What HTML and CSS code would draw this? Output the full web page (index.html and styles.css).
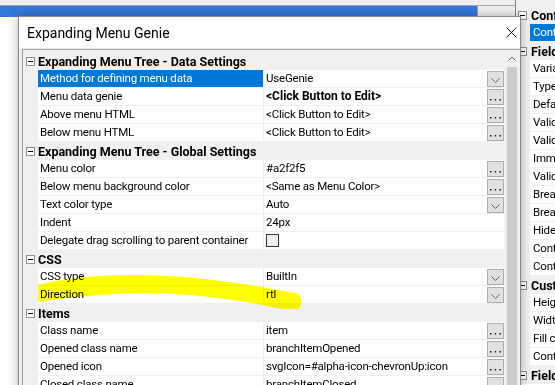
FILE: index.html
```html
<!DOCTYPE html>
<html lang="en">
<head>
    <meta charset="UTF-8">
    <title>Expanding Menu Genie</title>
    <link rel="stylesheet" href="styles.css">
</head>
<body>
<div class="desktop">
    <div class="main-area">
        <div class="strip"></div>
        <div class="list-head">
            <div class="list-sel"></div>
            <div class="list-rest"></div>
        </div>
    </div>

    <!-- property panel behind the dialog -->
    <div class="side-panel">
        <div class="sp-top"></div>
        <div class="sp-cat"><span class="toggle"></span><span class="sp-label">Configuration</span></div>
        <div class="sp-row"><span class="sp-gutter"></span><span class="sp-name sel">Control name</span></div>
        <div class="sp-cat"><span class="toggle"></span><span class="sp-label">Fields</span></div>
        <div class="sp-row"><span class="sp-gutter"></span><span class="sp-name">Variable</span></div>
        <div class="sp-row"><span class="sp-gutter"></span><span class="sp-name">Type</span></div>
        <div class="sp-row"><span class="sp-gutter"></span><span class="sp-name">Default value</span></div>
        <div class="sp-row"><span class="sp-gutter"></span><span class="sp-name">Validation</span></div>
        <div class="sp-row"><span class="sp-gutter"></span><span class="sp-name">Validation message</span></div>
        <div class="sp-row"><span class="sp-gutter"></span><span class="sp-name">Immediate</span></div>
        <div class="sp-row"><span class="sp-gutter"></span><span class="sp-name">Validate on</span></div>
        <div class="sp-row"><span class="sp-gutter"></span><span class="sp-name">Break before</span></div>
        <div class="sp-row"><span class="sp-gutter"></span><span class="sp-name">Break after</span></div>
        <div class="sp-row"><span class="sp-gutter"></span><span class="sp-name">Hide</span></div>
        <div class="sp-row"><span class="sp-gutter"></span><span class="sp-name">Container class</span></div>
        <div class="sp-row"><span class="sp-gutter"></span><span class="sp-name">Control class</span></div>
        <div class="sp-cat"><span class="toggle"></span><span class="sp-label">Custom Size</span></div>
        <div class="sp-row"><span class="sp-gutter"></span><span class="sp-name">Height</span></div>
        <div class="sp-row"><span class="sp-gutter"></span><span class="sp-name">Width</span></div>
        <div class="sp-row"><span class="sp-gutter"></span><span class="sp-name">Fill container</span></div>
        <div class="sp-row"><span class="sp-gutter"></span><span class="sp-name">Container width</span></div>
        <div class="sp-cat"><span class="toggle"></span><span class="sp-label">Field Events</span></div>
    </div>

    <!-- Dialog -->
    <div class="dialog">
        <div class="dlg-title">
            <span>Expanding Menu Genie</span>
            <svg class="dlg-close" width="11" height="11" viewBox="0 0 11 11">
                <path d="M0.5 0.5 L10.5 10.5 M10.5 0.5 L0.5 10.5" stroke="#111" stroke-width="1" fill="none"/>
            </svg>
        </div>
        <div class="dlg-body">
            <div class="grid">
                <div class="pg-rows">
                    <div class="cat"><span class="toggle"></span>Expanding Menu Tree - Data Settings</div>
                    <div class="row"><span class="gutter"></span><span class="name sel">Method for defining menu data</span><span class="value"><span class="text">UseGenie</span><span class="btn drop"></span></span></div>
                    <div class="row"><span class="gutter"></span><span class="name">Menu data genie</span><span class="value"><span class="text bold">&lt;Click Button to Edit&gt;</span><span class="btn dots"></span></span></div>
                    <div class="row"><span class="gutter"></span><span class="name">Above menu HTML</span><span class="value"><span class="text">&lt;Click Button to Edit&gt;</span><span class="btn dots"></span></span></div>
                    <div class="row"><span class="gutter"></span><span class="name">Below menu HTML</span><span class="value"><span class="text">&lt;Click Button to Edit&gt;</span><span class="btn dots"></span></span></div>

                    <div class="cat"><span class="toggle"></span>Expanding Menu Tree - Global Settings</div>
                    <div class="row"><span class="gutter"></span><span class="name">Menu color</span><span class="value"><span class="text">#a2f2f5</span><span class="btn dots"></span></span></div>
                    <div class="row"><span class="gutter"></span><span class="name">Below menu background color</span><span class="value"><span class="text">&lt;Same as Menu Color&gt;</span><span class="btn dots"></span></span></div>
                    <div class="row"><span class="gutter"></span><span class="name">Text color type</span><span class="value"><span class="text">Auto</span><span class="btn drop"></span></span></div>
                    <div class="row"><span class="gutter"></span><span class="name">Indent</span><span class="value"><span class="text">24px</span></span></div>
                    <div class="row"><span class="gutter"></span><span class="name">Delegate drag scrolling to parent container</span><span class="value"><span class="check"></span></span></div>

                    <div class="cat"><span class="toggle"></span>CSS</div>
                    <div class="row"><span class="gutter"></span><span class="name">CSS type</span><span class="value"><span class="text">BuiltIn</span><span class="btn drop"></span></span></div>
                    <div class="row"><span class="gutter"></span><span class="name">Direction</span><span class="value"><span class="text">rtl</span><span class="btn drop"></span></span></div>

                    <div class="cat"><span class="toggle"></span>Items</div>
                    <div class="row"><span class="gutter"></span><span class="name">Class name</span><span class="value"><span class="text">item</span><span class="btn dots"></span></span></div>
                    <div class="row"><span class="gutter"></span><span class="name">Opened class name</span><span class="value"><span class="text">branchItemOpened</span><span class="btn dots"></span></span></div>
                    <div class="row"><span class="gutter"></span><span class="name">Opened icon</span><span class="value"><span class="text">svgIcon=#alpha-icon-chevronUp:icon</span><span class="btn dots"></span></span></div>
                    <div class="row"><span class="gutter"></span><span class="name">Closed class name</span><span class="value"><span class="text">branchItemClosed</span><span class="btn dots"></span></span></div>
                </div>
                <div class="pg-scroll">
                    <div class="scroll-up">
                        <svg width="8" height="5" viewBox="0 0 8 5"><path d="M0.5 4.5 L4 1 L7.5 4.5" stroke="#606060" fill="none"/></svg>
                    </div>
                    <div class="thumb"></div>
                </div>
            </div>
        </div>
    </div>

    <!-- highlighter stroke drawn over the screenshot -->
    <svg class="marker" width="555" height="385" viewBox="0 0 555 385">
        <path d="M38 285 C60 279 92 275 133 275 C180 275 230 281 272 289 L296 293 Q306 300 298 309 L282 309 C240 300 200 294 150 293 C100 293 62 299 38 302 Z" fill="#ffff00"/>
    </svg>
</div>
</body>
</html>
```

FILE: styles.css
```css
body {
    margin: 0;
    width: 555px;
    height: 385px;
    overflow: hidden;
    font-family: "Segoe UI", Roboto, sans-serif;
    font-size: 11.5px;
    letter-spacing: -0.2px;
    color: #000;
    background: #fff;
}

.desktop {
    position: relative;
    display: flex;
    height: 385px;
}

.main-area {
    width: 515px;
}

.strip {
    height: 5px;
    background: #f0f0f0;
    border-bottom: 1px solid #a8a8a8;
}

.list-head {
    display: flex;
    height: 11px;
}

.list-sel {
    width: 477px;
    background: #3478dc;
}

.list-rest {
    flex: 1;
    background: #f0f0f0;
    border-left: 1px solid #a0a0a0;
}

/* Side panel */
.side-panel {
    flex: 1;
    border-left: 1px solid #828282;
    background: #fff;
    overflow: hidden;
}

.sp-top {
    height: 6px;
    background: #f0f0f0;
}

.sp-cat {
    display: flex;
    align-items: center;
    height: 18px;
    background: #f0f0f0;
    font-weight: bold;
    font-size: 12.5px;
    letter-spacing: 0;
    white-space: nowrap;
}

.sp-cat .toggle {
    margin: 0 3px 0 2px;
}

.sp-label {
    padding-left: 1px;
}

.sp-row {
    display: flex;
    height: 17px;
    border-bottom: 1px solid #f0f0f0;
    white-space: nowrap;
}

.sp-gutter {
    width: 14px;
    flex: none;
    background: #f0f0f0;
}

.sp-name {
    flex: 1;
    padding-left: 3px;
    line-height: 17px;
}

.sp-name.sel {
    background: #0078d7;
    color: #fff;
}

/* Dialog */
.dialog {
    position: absolute;
    left: 18px;
    top: 16px;
    width: 501px;
    height: 380px;
    border: 1px solid #8a8a8a;
    background: #f0f0f0;
    box-shadow: 0 0 9px rgba(0, 0, 0, 0.3);
    display: flex;
    flex-direction: column;
}

.dlg-title {
    height: 31px;
    flex: none;
    display: flex;
    align-items: center;
    padding-left: 8px;
    background: #fff;
    font-size: 14px;
    letter-spacing: 0;
}

.dlg-close {
    margin-left: auto;
    margin-right: 3px;
}

.dlg-body {
    flex: 1;
    padding: 1px 0 0 3px;
    overflow: hidden;
}

.grid {
    display: flex;
    height: 100%;
    border-left: 1px solid #a0a0a0;
    border-top: 1px solid #a0a0a0;
    background: #f0f0f0;
}

.pg-rows {
    flex: 1;
    padding-top: 2px;
}

.toggle {
    position: relative;
    flex: none;
    width: 9px;
    height: 9px;
    box-sizing: border-box;
    border: 1px solid #8f8f8f;
    background: #fff;
}

.toggle::after {
    content: "";
    position: absolute;
    left: 1px;
    top: 3px;
    width: 5px;
    height: 1px;
    background: #000;
}

.cat {
    display: flex;
    align-items: center;
    height: 18px;
    font-weight: bold;
    font-size: 12.5px;
    letter-spacing: 0;
    background: #f0f0f0;
}

.cat .toggle {
    margin: 0 3px;
}

.row {
    display: flex;
    height: 17px;
    border-bottom: 1px solid #f0f0f0;
    white-space: nowrap;
}

.gutter {
    width: 15px;
    flex: none;
    background: #f0f0f0;
}

.name {
    width: 223px;
    flex: none;
    padding-left: 2px;
    line-height: 17px;
    overflow: hidden;
    border-right: 1px solid #f0f0f0;
    background: #fff;
}

.name.sel {
    background: #0078d7;
    color: #fff;
}

.value {
    flex: 1;
    display: flex;
    padding-left: 2px;
    line-height: 17px;
    background: #fff;
}

.value .text {
    flex: 1;
}

.bold {
    font-weight: bold;
    font-size: 12px;
    letter-spacing: 0;
}

.btn {
    flex: none;
    width: 17px;
    height: 16px;
    margin-top: 1px;
    box-sizing: border-box;
    border: 1px solid #adadad;
    background: #e1e1e1;
    background-repeat: no-repeat;
    background-position: center;
}

.btn.drop {
    background-image: url("data:image/svg+xml,%3Csvg xmlns='http://www.w3.org/2000/svg' width='9' height='5'%3E%3Cpath d='M0.5 0.5 L4.5 4.5 L8.5 0.5' stroke='%23606060' fill='none'/%3E%3C/svg%3E");
    background-position: center 6px;
}

.btn.dots {
    background-image: url("data:image/svg+xml,%3Csvg xmlns='http://www.w3.org/2000/svg' width='11' height='2'%3E%3Crect x='0' y='0' width='1.5' height='1.5' fill='%231a1a50'/%3E%3Crect x='4.7' y='0' width='1.5' height='1.5' fill='%231a1a50'/%3E%3Crect x='9.4' y='0' width='1.5' height='1.5' fill='%231a1a50'/%3E%3C/svg%3E");
    background-position: center 9px;
}

.check {
    width: 13px;
    height: 13px;
    margin-top: 2px;
    box-sizing: border-box;
    border: 1px solid #333;
    background: #f0f0f0;
}

.pg-scroll {
    width: 16px;
    flex: none;
    display: flex;
    flex-direction: column;
    background: #f0f0f0;
}

.scroll-up {
    height: 17px;
    display: flex;
    align-items: center;
    justify-content: center;
}

.thumb {
    flex: 1;
    margin: 0 3px 0 3px;
    background: #cdcdcd;
}

.marker {
    position: absolute;
    left: 0;
    top: 0;
    pointer-events: none;
    mix-blend-mode: multiply;
}
```
